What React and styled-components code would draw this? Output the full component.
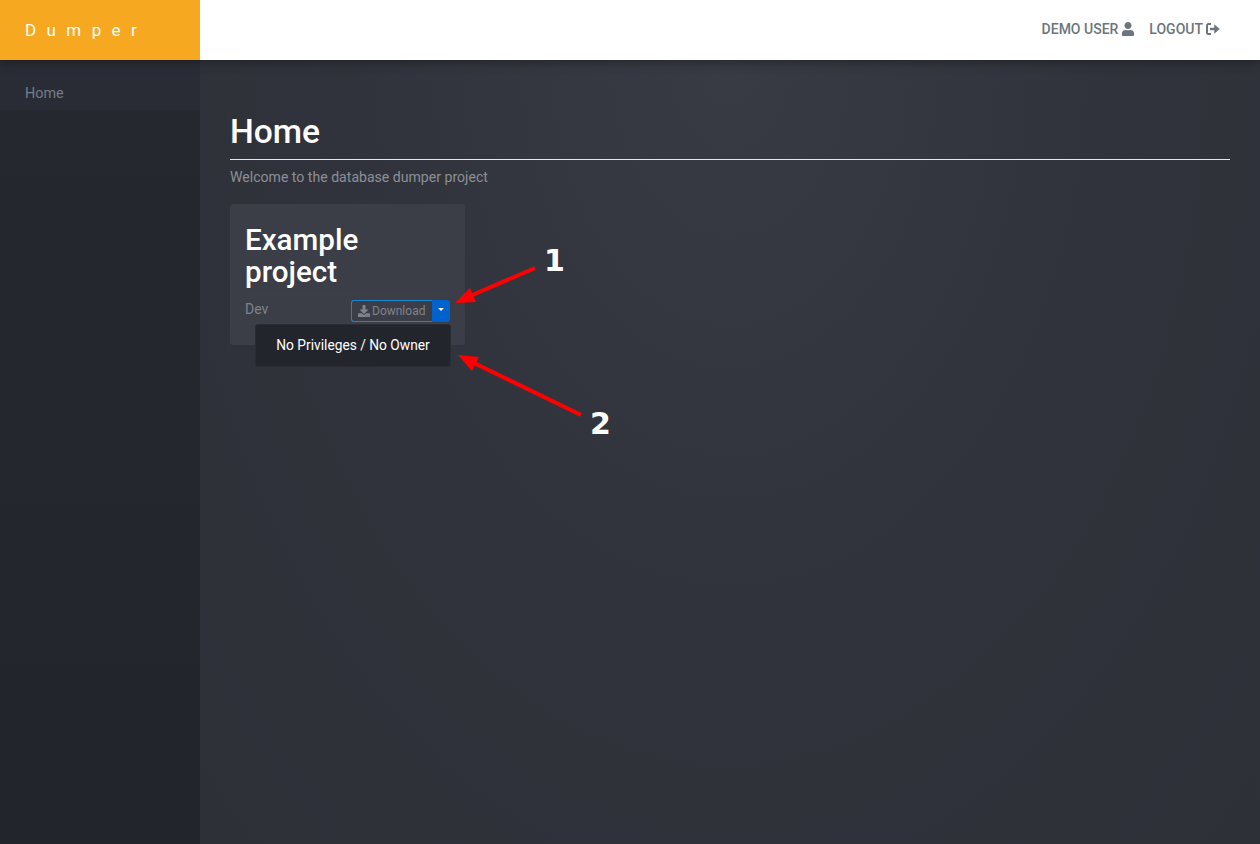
import React from "react";
import styled, { createGlobalStyle } from "styled-components";
import { FaDownload, FaUser } from "react-icons/fa";

const GlobalStyle = createGlobalStyle`
  html, body {
    margin: 0;
    padding: 0;
    background: #2e3038;
  }
  * {
    box-sizing: border-box;
  }
  body {
    font-family: Roboto, "Liberation Sans", sans-serif;
    font-size: 14px;
  }
`;

const Page = styled.div`
  position: relative;
  width: 1260px;
  height: 844px;
  overflow: hidden;
  display: flex;
  flex-direction: column;
`;

const Header = styled.header`
  height: 60px;
  flex: none;
  display: flex;
  align-items: stretch;
  background: #fff;
  box-shadow: 0 2px 10px rgba(0, 0, 0, 0.35);
  z-index: 2;
`;

const Brand = styled.div`
  width: 200px;
  background: #f6a821;
  color: #fff;
  font-size: 17px;
  font-weight: 400;
  letter-spacing: 10.4px;
  padding-left: 25px;
  line-height: 60px;
`;

const HeaderLinks = styled.nav`
  margin-left: auto;
  display: flex;
  align-items: center;
  gap: 14px;
  padding: 0 40px 3px 0;
`;

const HeaderLink = styled.a`
  display: flex;
  align-items: center;
  gap: 3px;
  color: #6c757d;
  font-size: 14px;
  font-weight: 500;
  svg {
    font-size: 14px;
  }
`;

const LogoutIcon = styled.svg`
  width: 14px;
  height: 12px;
  fill: none;
  stroke: currentColor;
  stroke-width: 2;
`;

const Body = styled.div`
  flex: 1;
  display: flex;
  min-height: 0;
`;

const Sidebar = styled.aside`
  width: 200px;
  flex: none;
  background: linear-gradient(180deg, #262830 0%, #23252d 100%);
`;

const SideItem = styled.div`
  height: 50px;
  padding-left: 25px;
  line-height: 68px;
  color: #747c88;
  font-size: 14.4px;
  background: #2a2c35;
`;

const Main = styled.main`
  flex: 1;
  padding: 50px 30px 0;
  background: radial-gradient(
    ellipse at 50% 0%,
    #383b44 0%,
    #31333c 50%,
    #2e3038 100%
  );
`;

const Title = styled.h1`
  margin: 0;
  color: #fff;
  font-size: 33.6px;
  font-weight: 500;
  line-height: 44px;
  padding-bottom: 5px;
  border-bottom: 1px solid #e6e6e6;
`;

const Lead = styled.p`
  margin: 9px 0 0;
  color: #8c8f96;
  font-size: 14.08px;
  line-height: 17px;
`;

const Card = styled.section`
  position: relative;
  width: 235px;
  height: 141px;
  margin-top: 18px;
  padding: 20px 15px 0;
  border-radius: 3px;
  background: #3b3d47;
`;

const CardTitle = styled.h2`
  margin: 0;
  color: #fff;
  font-size: 29.6px;
  font-weight: 500;
  line-height: 32px;
`;

const CardRow = styled.div`
  display: flex;
  justify-content: space-between;
  align-items: flex-start;
  margin-top: 6px;
  padding: 5px 0 1px;
  border-top: 1px solid #3e4049;
  border-bottom: 1px solid #3e4049;
`;

const Env = styled.span`
  color: #7f838b;
  font-size: 14px;
  line-height: 17px;
  margin-top: 1px;
`;

const SplitButton = styled.div`
  display: flex;
  height: 22px;
`;

const DownloadButton = styled.button`
  display: flex;
  align-items: center;
  gap: 2px;
  width: 81px;
  padding: 0 0 0 6px;
  border: 1px solid #1a86d0;
  border-right: none;
  border-radius: 3px 0 0 3px;
  background: transparent;
  color: #80838b;
  font-family: inherit;
  font-size: 12px;
  svg {
    font-size: 12px;
  }
`;

const CaretButton = styled.button`
  display: flex;
  align-items: center;
  justify-content: center;
  width: 18px;
  padding: 0 0 3px;
  border: none;
  border-radius: 0 3px 3px 0;
  background: #0062cc;
  &::after {
    content: "";
    border-top: 3px solid #fff;
    border-left: 3.5px solid transparent;
    border-right: 3.5px solid transparent;
  }
`;

const Menu = styled.div`
  position: absolute;
  left: 25px;
  top: 120px;
  width: 196px;
  height: 43px;
  border-radius: 3px;
  background: #23252d;
  border: 1px solid #2a2c34;
  color: #fff;
  font-size: 13.75px;
  line-height: 41px;
  text-align: center;
`;

const Overlay = styled.svg`
  position: absolute;
  left: 0;
  top: 0;
  pointer-events: none;
  z-index: 3;
`;

const Callout = styled.span`
  position: absolute;
  left: ${(props) => props.$x}px;
  top: ${(props) => props.$y}px;
  color: #fff;
  font-family: "DejaVu Sans", sans-serif;
  font-size: 30px;
  font-weight: 700;
  line-height: 36px;
  z-index: 3;
`;

const App = () => {
  return (
    <Page>
      <GlobalStyle />
      <Header>
        <Brand>Dumper</Brand>
        <HeaderLinks>
          <HeaderLink>
            DEMO USER <FaUser />
          </HeaderLink>
          <HeaderLink>
            LOGOUT
            <LogoutIcon viewBox="0 0 14 12">
              <path d="M5 1H2.5Q1 1 1 2.5v7Q1 11 2.5 11H5" />
              <path d="M4 6h6" strokeWidth="2.4" />
              <path d="M8.5 1.8 13.5 6 8.5 10.2z" fill="currentColor" strokeWidth="0.5" />
            </LogoutIcon>
          </HeaderLink>
        </HeaderLinks>
      </Header>
      <Body>
        <Sidebar>
          <SideItem>Home</SideItem>
        </Sidebar>
        <Main>
          <Title>Home</Title>
          <Lead>Welcome to the database dumper project</Lead>
          <Card>
            <CardTitle>Example project</CardTitle>
            <CardRow>
              <Env>Dev</Env>
              <SplitButton>
                <DownloadButton>
                  <FaDownload /> Download
                </DownloadButton>
                <CaretButton />
              </SplitButton>
            </CardRow>
            <Menu>No Privileges / No Owner</Menu>
          </Card>
        </Main>
      </Body>
      <Overlay width="1260" height="844">
        <line x1="535" y1="268" x2="470" y2="296" stroke="#f00" strokeWidth="4" />
        <polygon points="455,303 470,288 476,302" fill="#f00" />
        <line x1="581" y1="415" x2="472" y2="362" stroke="#f00" strokeWidth="4" />
        <polygon points="458,355 479,357 472,371" fill="#f00" />
      </Overlay>
      <Callout $x={544} $y={243}>1</Callout>
      <Callout $x={590} $y={406}>2</Callout>
    </Page>
  );
};

export default App;
